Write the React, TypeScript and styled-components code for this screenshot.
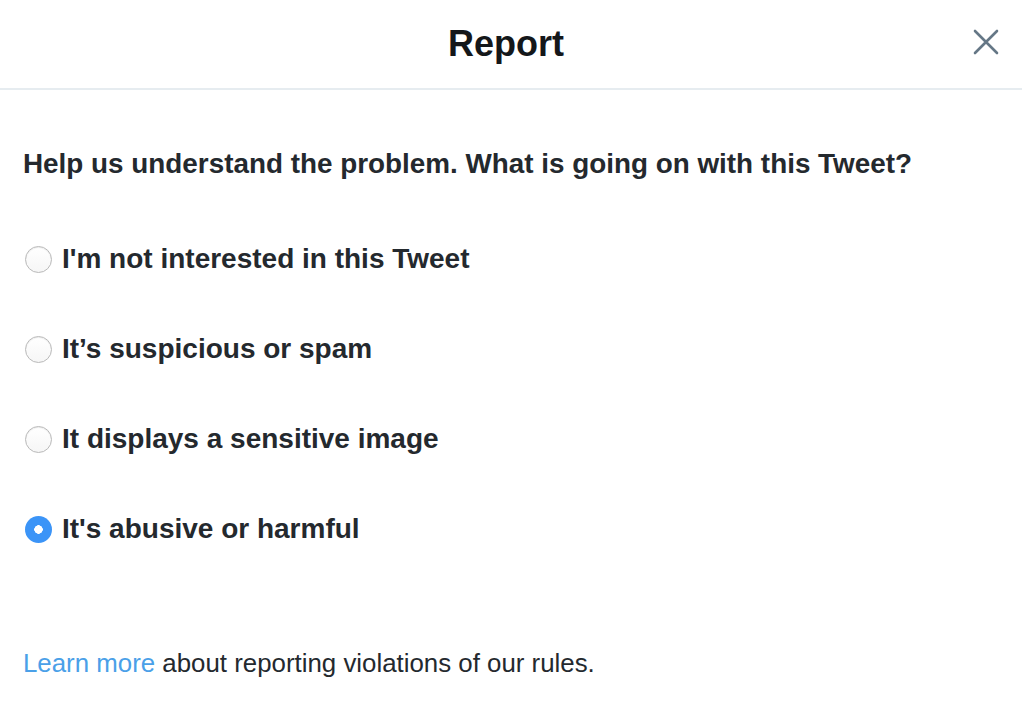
import { useState } from 'react';
import styled, { createGlobalStyle } from 'styled-components';

const options = [
  "I'm not interested in this Tweet",
  'It’s suspicious or spam',
  'It displays a sensitive image',
  "It's abusive or harmful",
];

export default function App() {
  const [selected, setSelected] = useState<number>(3);

  return (
    <>
      <GlobalStyle />
      <StyledDialog>
        <StyledHeader>
          <StyledTitle>Report</StyledTitle>
          <StyledClose aria-label="Close">
            <svg width="26" height="26" viewBox="0 0 26 26">
              <path
                d="M2 2 L24 24 M24 2 L2 24"
                stroke="#657786"
                strokeWidth="2.6"
                strokeLinecap="round"
              />
            </svg>
          </StyledClose>
        </StyledHeader>
        <StyledBody>
          <StyledQuestion>
            Help us understand the problem. What is going on with this Tweet?
          </StyledQuestion>
          <StyledList>
            {options.map((label, i) => (
              <StyledOption key={label} onClick={() => setSelected(i)}>
                <StyledRadio checked={selected === i} />
                <span>{label}</span>
              </StyledOption>
            ))}
          </StyledList>
          <StyledFooter>
            <StyledLink href="#">Learn more</StyledLink> about reporting
            violations of our rules.
          </StyledFooter>
        </StyledBody>
      </StyledDialog>
    </>
  );
}

const GlobalStyle = createGlobalStyle`
  body {
    margin: 0;
    background: #ffffff;
    font-family: 'Liberation Sans', Arial, sans-serif;
    color: #24292e;
  }
`;

const StyledDialog = styled.div`
  width: 1022px;
  height: 712px;
  background: #fff;
`;

const StyledHeader = styled.header`
  position: relative;
  height: 90px;
  display: flex;
  align-items: center;
  justify-content: center;
  border-bottom: 2px solid #e6ecf0;
  box-sizing: border-box;
`;

const StyledTitle = styled.h1`
  margin: 0;
  font-size: 36px;
  font-weight: 700;
  color: #14171a;
  transform: translateX(-5px);
`;

const StyledClose = styled.button`
  position: absolute;
  right: 23px;
  top: 29px;
  padding: 0;
  border: none;
  background: none;
  cursor: pointer;
  display: flex;
`;

const StyledBody = styled.div`
  padding: 0 23px;
`;

const StyledQuestion = styled.p`
  margin: 0;
  padding-top: 59px;
  font-size: 27.85px;
  font-weight: 700;
  line-height: 30px;
  color: #24292e;
  white-space: nowrap;
`;

const StyledList = styled.div`
  display: flex;
  flex-direction: column;
  gap: 60px;
  margin-top: 65px;
`;

const StyledOption = styled.label`
  display: flex;
  align-items: center;
  gap: 10px;
  height: 30px;
  font-size: 28px;
  font-weight: 700;
  color: #24292e;
  cursor: pointer;
`;

const StyledRadio = styled.span<{ checked: boolean }>`
  width: 27px;
  height: 27px;
  border-radius: 50%;
  box-sizing: border-box;
  margin-left: 2px;
  flex-shrink: 0;
  ${({ checked }) =>
    checked
      ? `
    background: radial-gradient(circle, #fff 0 4px, #3b94f7 4.5px);
  `
      : `
    background: linear-gradient(#fff, #f6f6f6);
    border: 1.5px solid #b9b9b9;
    box-shadow: inset 0 1px 1px rgba(0,0,0,0.08);
  `}
`;

const StyledFooter = styled.p`
  margin: 0;
  margin-top: 104px;
  font-size: 25.85px;
  line-height: 30px;
  color: #24292e;
`;

const StyledLink = styled.a`
  color: #4aa0e8;
  text-decoration: none;
`;
